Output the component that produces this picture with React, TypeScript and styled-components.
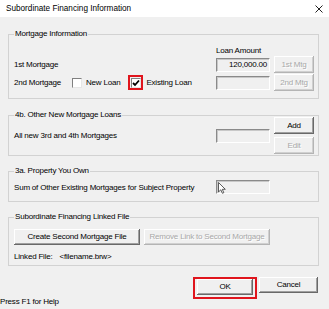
import * as React from 'react'
import styled, { createGlobalStyle } from 'styled-components'

// global
const GlobalStyle = createGlobalStyle`
  html, body {
    margin: 0;
    padding: 0;
    background: #f0f0f0;
  }
  #root {
    width: 329px;
    height: 309px;
  }
`

// styled
const Window = styled.div`
  background: #f0f0f0;
  color: #000;
  display: flex;
  flex-direction: column;
  font-family: "Liberation Sans", Arial, sans-serif;
  font-size: 8px;
  height: 309px;
  letter-spacing: -0.2px;
  overflow: hidden;
  width: 329px;
`

const TitleBar = styled.div`
  align-items: center;
  background: #fff;
  display: flex;
  flex: 0 0 17px;
  justify-content: space-between;
  padding: 0 6px 0 6px;
`

const Title = styled.span`
  font-size: 8.2px;
  letter-spacing: 0;
`

const Body = styled.div`
  display: flex;
  flex-direction: column;
  padding: 0 10px 0 8px;
`

const Group = styled.fieldset<{ $gap: number; $pt: number; $pb: number }>`
  border: 1px solid #d2d2d2;
  margin: ${(p) => p.$gap}px 0 0 0;
  min-inline-size: 0;
  padding: ${(p) => p.$pt}px 4px ${(p) => p.$pb}px 5px;
`

const Legend = styled.legend`
  line-height: 10px;
  padding: 0 1px;
`

const Grid = styled.div<{ $rows: string; $gap: number; $shift?: number }>`
  column-gap: 4px;
  display: grid;
  grid-template-columns: 1fr 54px 40px;
  grid-template-rows: ${(p) => p.$rows};
  margin-top: ${(p) => p.$shift || 0}px;
  row-gap: ${(p) => p.$gap}px;
`

const Label = styled.span<{ $span?: number }>`
  align-self: center;
  grid-column: 1;
  grid-row: ${(p) => (p.$span ? `span ${p.$span}` : 'auto')};
  line-height: 9px;
  white-space: nowrap;
`

const ColumnHead = styled.span`
  align-self: end;
  grid-column: 2 / span 2;
  line-height: 9px;
`

const Field = styled.div<{ $span?: number }>`
  align-self: center;
  background: #f0f0f0;
  border-bottom: 1px solid #fff;
  border-left: 1px solid #8a8a8a;
  border-right: 1px solid #fff;
  border-top: 1px solid #8a8a8a;
  box-shadow: inset 1px 1px 0 #c8c8c8;
  box-sizing: border-box;
  grid-column: 2;
  grid-row: ${(p) => (p.$span ? `span ${p.$span}` : 'auto')};
  height: 14px;
  line-height: 12px;
  padding-right: 2px;
  position: relative;
  text-align: right;
`

const Button = styled.button<{ $w?: number; $h?: number }>`
  background: #f0f0f0;
  border: none;
  box-shadow: inset -1px -1px 0 #696969, inset 1px 1px 0 #fff, inset -2px -2px 0 #a0a0a0;
  box-sizing: border-box;
  color: #000;
  font-family: inherit;
  font-size: 8px;
  height: ${(p) => p.$h || 17}px;
  letter-spacing: -0.2px;
  line-height: 1;
  padding: 0;
  width: ${(p) => (p.$w ? `${p.$w}px` : '100%')};

  &:disabled {
    box-shadow: inset -1px -1px 0 #b4b4b4, inset 1px 1px 0 #fff, inset -2px -2px 0 #d0d0d0;
    color: #a8a8a8;
    text-shadow: 1px 1px 0 #fff;
  }
`

const OptionRow = styled.div`
  align-items: center;
  display: flex;
  grid-column: 1;
`

const RowLabel = styled.span`
  line-height: 9px;
  width: 58px;
`

const Option = styled.label<{ $gap: number; $mr?: number }>`
  align-items: center;
  display: flex;
  gap: ${(p) => p.$gap}px;
  line-height: 9px;
  margin-right: ${(p) => p.$mr || 0}px;
`

const Box = styled.span`
  align-items: center;
  background: #fff;
  border-bottom: 1px solid #e6e6e6;
  border-left: 1px solid #808080;
  border-right: 1px solid #e6e6e6;
  border-top: 1px solid #808080;
  box-sizing: border-box;
  display: flex;
  height: 10px;
  justify-content: center;
  width: 10px;
`

const Highlight = styled.span`
  align-items: center;
  border: 2px solid #e0151d;
  box-sizing: border-box;
  display: inline-flex;
  justify-content: center;
`

const BoxHighlight = styled(Highlight)`
  height: 15px;
  width: 15px;
`

const ButtonHighlight = styled(Highlight)`
  align-items: flex-start;
  padding: 0 2px 2px 2px;
`

const Stack = styled.div`
  display: flex;
  gap: 4px;
`

const FileLine = styled.div`
  display: flex;
  gap: 7px;
  line-height: 9px;
  margin-top: 7px;
`

const Pointer = styled.svg`
  left: 1px;
  position: absolute;
  top: 1px;
`

const Footer = styled.div`
  display: flex;
  flex: 0 0 29px;
  justify-content: space-between;
  margin-top: 11px;
  padding-right: 11px;
`

const Help = styled.span`
  align-self: flex-end;
  line-height: 9px;
`

const Actions = styled.div`
  align-items: flex-start;
  display: flex;
  gap: 2px;
`

const CheckMark = () => (
  <svg width="8" height="8" viewBox="0 0 8 8">
    <polyline points="1,4 3,6 7,1.5" fill="none" stroke="#000" strokeWidth="1.8" />
  </svg>
)

export default function App() {
  return (
    <>
      <GlobalStyle />
      <Window>
        <TitleBar>
          <Title>Subordinate Financing Information</Title>
          <svg width="8" height="8" viewBox="0 0 8 8">
            <path d="M0.5 0.5 L7.5 7.5 M7.5 0.5 L0.5 7.5" stroke="#222" strokeWidth="1" />
          </svg>
        </TitleBar>

        <Body>
          <Group $gap={12} $pt={7} $pb={7}>
            <Legend>Mortgage Information</Legend>
            <Grid $rows="9px 17px 17px" $gap={1}>
              <ColumnHead>Loan Amount</ColumnHead>
              <Label>1st Mortgage</Label>
              <Field>120,000.00</Field>
              <Button disabled>1st Mtg</Button>
              <OptionRow>
                <RowLabel>2nd Mortgage</RowLabel>
                <Option $gap={4} $mr={8}>
                  <Box />
                  New Loan
                </Option>
                <Option $gap={3}>
                  <BoxHighlight>
                    <Box>
                      <CheckMark />
                    </Box>
                  </BoxHighlight>
                  Existing Loan
                </Option>
              </OptionRow>
              <Field />
              <Button disabled>2nd Mtg</Button>
            </Grid>
          </Group>

          <Group $gap={11} $pt={0} $pb={1}>
            <Legend>4b. Other New Mortgage Loans</Legend>
            <Grid $rows="17px 17px" $gap={3} $shift={-3}>
              <Label $span={2}>All new 3rd and 4th Mortgages</Label>
              <Field $span={2} />
              <Button>Add</Button>
              <Button disabled>Edit</Button>
            </Grid>
          </Group>

          <Group $gap={10} $pt={4} $pb={7}>
            <Legend>3a. Property You Own</Legend>
            <Grid $rows="14px" $gap={0}>
              <Label>Sum of Other Existing Mortgages for Subject Property</Label>
              <Field>
                <Pointer width="8" height="12" viewBox="0 0 8 12">
                  <path d="M0.5 0.5 L0.5 10 L2.8 7.8 L4.4 11.3 L5.8 10.7 L4.3 7.3 L7.3 7.3 Z" fill="#fff" stroke="#333" strokeWidth="0.8" />
                </Pointer>
              </Field>
            </Grid>
          </Group>

          <Group $gap={10} $pt={7} $pb={4}>
            <Legend>Subordinate Financing Linked File</Legend>
            <Stack>
              <Button $w={126} $h={16}>Create Second Mortgage File</Button>
              <Button $w={126} $h={16} disabled>Remove Link to Second Mortgage</Button>
            </Stack>
            <FileLine>
              <span>Linked File:</span>
              <span>&lt;filename.brw&gt;</span>
            </FileLine>
          </Group>
        </Body>

        <Footer>
          <Help>Press F1 for Help</Help>
          <Actions>
            <ButtonHighlight>
              <Button $w={56} $h={16}>OK</Button>
            </ButtonHighlight>
            <Button $w={59} $h={16}>Cancel</Button>
          </Actions>
        </Footer>
      </Window>
    </>
  )
}
